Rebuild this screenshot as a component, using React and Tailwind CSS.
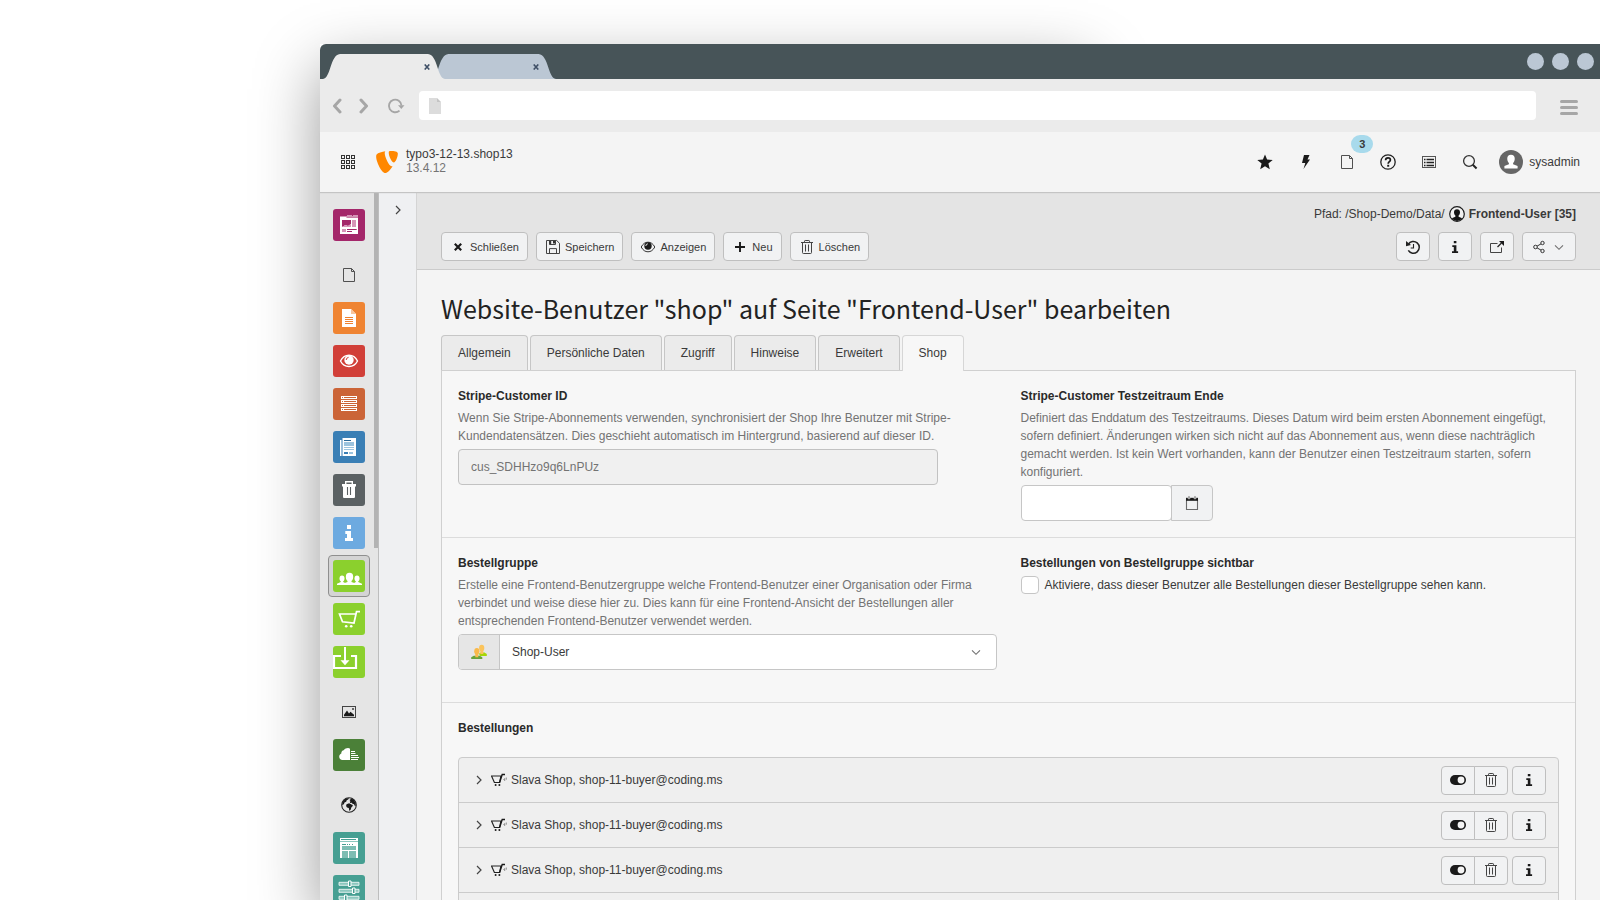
import React from "react";
import { SiTypo3 } from "react-icons/si";

/* ---------- 16px action icons ---------- */

function Icon({ children, className = "h-4 w-4" }) {
  return (
    <svg viewBox="0 0 16 16" fill="none" className={`${className} shrink-0`} aria-hidden="true">
      {children}
    </svg>
  );
}

const CloseIcon = () => (
  <Icon>
    <path d="M4.8 4.8 11.2 11.2M11.2 4.8 4.8 11.2" stroke="#1a1a1a" strokeWidth="2.2" />
  </Icon>
);

const SaveIcon = () => (
  <Icon>
    <path d="M1.5 1.5h10.2l2.8 2.8v10.2h-13z" stroke="#444" />
    <path d="M4.5 1.5v4h6v-4M4.5 14.5V9.6h7v4.9" stroke="#444" />
    <path d="M8 2h2v2.6H8zM4.6 2h1.6v3.4H4.6z" fill="#333" />
  </Icon>
);

const EyeIcon = () => (
  <Icon>
    <path d="M1.2 8C3 4.6 5.3 3.2 8 3.2S13 4.600 14.800 8C13 11.400 10.700 12.800 8 12.800S3 11.400 1.200 8z" stroke="#333" />
    <circle cx="8" cy="7" r="3.700" fill="#1a1a1a" />
    <path d="M5.800 7A2.200 2.200 0 0 1 7.800 4.800" stroke="#fff" strokeWidth=".9" />
  </Icon>
);

const PlusIcon = () => (
  <Icon>
    <path d="M8 3v10M3 8h10" stroke="#1a1a1a" strokeWidth="1.900" />
  </Icon>
);

const TrashIcon = () => (
  <Icon>
    <path d="M3.500 3.500v10.100q0 .9.900.9h7.200q.9 0 .9-.9V3.500" stroke="#444" />
    <path d="M2 3.500h12" stroke="#444" />
    <path d="M5.500 3V2.200q0-.7.700-.7h3.600q.7 0 .7.700V3" stroke="#444" />
    <path d="M6.500 5.500v7M9.500 5.500v7" stroke="#444" />
  </Icon>
);

const HistoryIcon = () => (
  <Icon>
    <path d="M3.300 5.300A5.900 5.900 0 1 1 3.300 11.400" stroke="#222" strokeWidth="1.500" />
    <path d="M1 2v5.200l5-1.200z" fill="#222" />
    <path d="M8.500 5v4H5.700" stroke="#222" strokeWidth="1.100" />
  </Icon>
);

const InfoIcon = () => (
  <Icon>
    <path d="M6.800 2h2.600v2.300H6.800zM5.300 6.300h4.100v6h1.700V14H5v-1.700h1.800V8H5.300z" fill="#1a1a1a" />
  </Icon>
);

const OpenIcon = () => (
  <Icon>
    <path d="M8.500 4.500H1.500v9h11V8.500" stroke="#444" />
    <path d="M8.500 8 12.500 4" stroke="#222" strokeWidth="1.200" />
    <path d="M10 2h5v5z" fill="#1a1a1a" />
  </Icon>
);

const ShareIcon = () => (
  <Icon>
    <circle cx="4.500" cy="8" r="1.800" stroke="#333" />
    <circle cx="11.500" cy="4" r="1.700" stroke="#333" />
    <circle cx="11.500" cy="12" r="1.700" stroke="#333" />
    <path d="M6.100 7.100 10 4.900M6.100 8.900l3.900 2.200" stroke="#333" />
  </Icon>
);

const ChevronDown = () => (
  <Icon>
    <path d="M4 6.300l4 4 4-4" stroke="#707070" strokeWidth="1.100" />
  </Icon>
);

const ChevronRight = () => (
  <Icon>
    <path d="M6 4l4 4-4 4" stroke="#444" strokeWidth="1.200" />
  </Icon>
);

const CalendarIcon = () => (
  <Icon>
    <path d="M2.500 4.500v10h11v-10" stroke="#6b6b6b" strokeWidth="1.100" />
    <path d="M2 2.800h12v3H2z" fill="#1a1a1a" />
    <path d="M4 1h2v2.800H4zM10 1h2v2.800h-2z" fill="#8a8a8a" stroke="#eee" strokeWidth=".5" />
  </Icon>
);

const ToggleOn = () => (
  <Icon>
    <rect x="0" y="3" width="16" height="10" rx="5" fill="#1a1a1a" />
    <circle cx="11" cy="8" r="3.400" fill="#f4f4f4" />
  </Icon>
);

const OrderCart = () => (
  <Icon>
    <path d="M.5 4h9.500L8.600 10.500H3.400z" stroke="#222" strokeWidth="1.200" />
    <path d="M8.600 10.500 11.200 2.500H14" stroke="#1a1a1a" strokeWidth="1.400" />
    <circle cx="4.600" cy="13" r="1" fill="#1a1a1a" />
    <circle cx="8.400" cy="13" r="1" fill="#1a1a1a" />
    <path d="M12.500 8l1.200-1.500v2.500M15.300 5.500v2.200" stroke="#777" strokeWidth=".8" />
  </Icon>
);

const PageIcon = () => (
  <Icon>
    <path d="M2.500 1.500h8l3 3v10h-11z" stroke="#505050" />
    <path d="M10.500 1.500v3h3" stroke="#505050" />
  </Icon>
);

const StarIcon = () => (
  <Icon>
    <path d="M8 .4l2.100 5.200 5.600.4-4.300 3.600 1.400 5.700L8 12.300l-4.800 3 1.400-5.700L.3 6l5.600-.4z" fill="#1a1a1a" />
  </Icon>
);

const BoltIcon = () => (
  <Icon>
    <path d="M6 1h5.500L9.500 5.500H12L5.500 15l1.800-6H4z" fill="#1a1a1a" />
  </Icon>
);

const HelpIcon = () => (
  <Icon>
    <circle cx="8" cy="8" r="7.200" stroke="#222" strokeWidth="1.300" />
    <path d="M5.600 6.300c0-1.500 1-2.400 2.400-2.400s2.400.9 2.400 2.100c0 1.700-2.200 1.700-2.200 3.700" stroke="#1a1a1a" strokeWidth="1.700" />
    <path d="M7.200 10.800h2v1.900h-2z" fill="#1a1a1a" />
  </Icon>
);

const ListIcon = () => (
  <Icon>
    <rect x="1.500" y="2.500" width="13" height="11" stroke="#555" />
    <path d="M3 5.500h1.500M3 8.500h1.500M3 11.500h1.500M5.500 5.500H13M5.500 8.500H13M5.500 11.500H13" stroke="#222" strokeWidth="1.400" />
  </Icon>
);

const SearchIcon = () => (
  <Icon>
    <circle cx="7" cy="7" r="5.400" stroke="#333" strokeWidth="1.300" />
    <path d="M10.800 10.800 14.600 14.400" stroke="#222" strokeWidth="2" />
  </Icon>
);

const GridIcon = () => (
  <Icon>
    {[1.5, 6.5, 11.5].map((y) =>
      [1.5, 6.5, 11.5].map((x) => (
        <rect key={`${x}-${y}`} x={x} y={y} width="3" height="3" stroke="#333" />
      ))
    )}
  </Icon>
);

const ImageIcon = () => (
  <Icon>
    <rect x="1.500" y="2.500" width="13" height="11" stroke="#444" />
    <path d="M3 12.200v-1.500L6 6.500l2 3 1.500-1.800 3.500 3v1.500z" fill="#1a1a1a" />
    <path d="M11 4h2v2h-2z" fill="#666" />
  </Icon>
);

const GlobeIcon = () => (
  <Icon>
    <circle cx="8" cy="8" r="7.300" stroke="#222" strokeWidth="1.100" />
    <path d="M2 4.500 4.500 1.800 8 1l-.8 1.500-1.500.8-.5 1.500-1.700.8-.6 1.600L1 8zM8.500 3l2.200-1.500 2.500 1.800 1.500 3.200v2.500l-1-.3-.8-1.700-1.200.2-.7-1.400-1.700.2-.6-1.200.9-.6zM5.500 7.300l2.600-1 2.900 1.500 1 1-1.700 1.800-.5 1.900-1.500 1.500-.5-3-1.800-.6-.9-1.400z" fill="#1a1a1a" />
  </Icon>
);

const UserAvatar = ({ dark }) =>
  dark ? (
    <Icon>
      <circle cx="8" cy="8" r="7.300" stroke="#1a1a1a" strokeWidth="1.200" fill="#f0f0f0" />
      <path d="M8 3.300c1.900 0 3 1.200 3 2.900 0 1.500-.6 2.600-1.400 3.400v1.200l3.600 1.400A7 7 0 0 1 8 15a7 7 0 0 1-5.200-2.800l3.600-1.400V9.600C5.600 8.800 5 7.700 5 6.200c0-1.700 1.100-2.900 3-2.900z" fill="#111" />
    </Icon>
  ) : (
    <Icon className="h-6 w-6">
      <circle cx="8" cy="8" r="8" fill="#666" />
      <path d="M8 3.200c1.600 0 2.500 1.100 2.500 2.600 0 1.200-.5 2.200-1.100 2.800v.9l3 1.200v1.600H3.600v-1.600l3-1.200v-.9C6 8 5.500 7 5.500 5.800c0-1.500.9-2.600 2.500-2.600z" fill="#fff" />
    </Icon>
  );

const GroupIcon = () => (
  <Icon>
    <path d="M8 9.800 9.500 8.500h4L15.800 10v2H9z" fill="#a6d608" />
    <ellipse cx="10.700" cy="4" rx="2.600" ry="3.300" fill="#fbc45c" />
    <path d="M9.300 6h3v4h-3z" fill="#fbc45c" />
    <path d="M.2 15v-1.700l2.600-1.500h6L11.300 13.300V15z" fill="#68a33b" />
    <ellipse cx="5.800" cy="7.300" rx="2.600" ry="3.400" fill="#f9b94a" />
    <path d="M4.300 9.500h3v3.800h-3z" fill="#f9b94a" />
  </Icon>
);

/* ---------- 32px module glyphs ---------- */

const Glyph = ({ children }) => (
  <svg viewBox="0 0 32 32" fill="none" className="h-8 w-8" aria-hidden="true">
    {children}
  </svg>
);

const glyphs = {
  layout: (
    <Glyph>
      <path d="M7 7.500h18V25H7z" fill="#fff" />
      <path d="M14 6.500h5M20 6.500h5" stroke="#d794b8" />
      <path d="M13.500 8.500H25" stroke="#a4276a" strokeWidth=".6" />
      <path d="M9 11h9v4L15 17l-2.500-1L9 18z" fill="#a4276a" />
      <path d="M9 18l3.500-2 2.500 1 3-2v3zM19 11h4v7h-4zM9 20h4v3H9z" fill="#d794b8" />
      <path d="M14 20.500h9.700M14 22.500h5" stroke="#a4276a" />
    </Glyph>
  ),
  page: (
    <Glyph>
      <path d="M9 7h9l5 5v13H9z" fill="#fff" />
      <path d="M18 7l5 5h-5z" fill="#f8c59c" />
      <path d="M12 15.500h8M12 17.500h8M12 19.500h8M12 21.500h8" stroke="#ef8230" />
    </Glyph>
  ),
  view: (
    <Glyph>
      <path d="M7.500 16C9.500 12 12.500 10.300 16 10.300S22.500 12 24.500 16C22.500 20 19.500 21.500 16 21.500S9.500 20 7.500 16z" stroke="#fff" strokeWidth="1.400" />
      <circle cx="16" cy="15" r="4.700" fill="#fff" />
      <path d="M13.200 15A2.800 2.800 0 0 1 15.600 12.300" stroke="#d13f38" />
    </Glyph>
  ),
  list: (
    <Glyph>
      <path d="M8 8h16v3H8zM8 12h16v3H8zM8 16h16v3H8zM8 20h16v3H8z" fill="#fff" />
      <path d="M9 9.500h1M9 13.500h1M9 17.500h1M9 21.500h1M11 9.500h12M11 13.500h12M11 17.500h12M11 21.500h12" stroke="#cb6437" />
    </Glyph>
  ),
  news: (
    <Glyph>
      <path d="M9.500 7H23v18H9.500zM7 9h1.500v16H7z" fill="#fff" />
      <path d="M11 9.500h7" stroke="#2a6796" />
      <path d="M11 11h10v4H11zM16 21h4v2h-4z" fill="#9cc3de" />
      <path d="M11 21h4v2h-4z" fill="#3a7fb5" />
      <path d="M11 16.500h10M11 18.500h10" stroke="#9cc3de" />
    </Glyph>
  ),
  trash: (
    <Glyph>
      <path d="M9 10h14v2.500h-1V23q0 1-1 1H11q-1 0-1-1V12.500H9z" fill="#fff" />
      <path d="M12.700 10V7.700h6.600V10" stroke="#fff" strokeWidth="1.400" />
      <path d="M14.500 13v8M17.500 13v8" stroke="#5b6163" strokeWidth="1.100" />
    </Glyph>
  ),
  info: (
    <Glyph>
      <path d="M14 8h4v4h-4zM12.300 14H18v7h2v3h-8v-3h2v-4h-1.700z" fill="#fff" />
    </Glyph>
  ),
  users: (
    <Glyph>
      <g fill="#fff">
        <ellipse cx="9" cy="18.500" rx="2.500" ry="3" />
        <path d="M7.800 20h2.400v2l2 1v2H4v-1.200l3.800-1.800z" />
        <ellipse cx="24" cy="18.500" rx="2.500" ry="3" />
        <path d="M22.800 20h2.400v2l3.800 1.800V25h-8v-2l1.800-1z" />
        <ellipse cx="16.500" cy="16.900" rx="3.700" ry="4.200" />
        <path d="M14.500 19h4v3l5 1.800V25h-14v-1.200l5-1.800z" />
      </g>
    </Glyph>
  ),
  cart: (
    <Glyph>
      <path d="M22.800 11H6.500l3 7.800 11.500 1.200 2.500-11.300H27" stroke="#fff" strokeWidth="1.700" />
      <circle cx="13.200" cy="23.300" r="1.300" fill="#fff" />
      <circle cx="18.200" cy="23.300" r="1.300" fill="#fff" />
    </Glyph>
  ),
  inbox: (
    <Glyph>
      <path d="M8 10H1v12h22V10h-5" stroke="#fff" strokeWidth="2.200" />
      <path d="M12 1v14" stroke="#fff" strokeWidth="2" />
      <path d="M7.500 14.300h9L12 19.300z" fill="#fff" />
    </Glyph>
  ),
  cloud: (
    <Glyph>
      <path d="M17 21H9.500C7.500 21 6.200 19.700 6.200 17.800 6.200 16 7.200 15 8.300 14.500 8.200 12.600 9.300 11.500 10.700 11.300 11.700 9.800 13.500 9 15 9c.9 0 1.500.3 2 .7z" fill="#fff" />
      <path d="M18 12.500h4M18 14.500h4.500M18 16.500h7M18 18.500h8M18 20.500h7" stroke="#fff" />
    </Glyph>
  ),
  store: (
    <Glyph>
      <path d="M7 6h18v20H7z" fill="#fff" />
      <path d="M8 7.500h15M9 12.500h4M14 12.500h1M16 12.500h1M19 12.500h1" stroke="#469f92" />
      <path d="M7 9.500h18" stroke="#8cc7be" />
      <path d="M9 14h14v4H9zM9 19h6v7H9zM16 19h7v7h-7z" fill="#7dbdb3" />
    </Glyph>
  ),
  sliders: (
    <Glyph>
      <path d="M6 7.300h20v3H6zM6 14.300h20v3H6zM6 21.300h20v3H6z" fill="#8cc7be" stroke="#fff" strokeWidth=".8" />
      <path d="M15.500 6h2.500v5.500h-2.500zM19.500 13h2.500v5.500h-2.500zM11.500 20h2.500v5.500h-2.500z" fill="#469f92" stroke="#fff" />
    </Glyph>
  ),
};

const modules = [
  { label: "Layout", glyph: "layout", color: "bg-[#a4276a]" },
  { header: <PageIcon />, label: "Web" },
  { label: "Seite", glyph: "page", color: "bg-[#ef8432]" },
  { label: "Anzeigen", glyph: "view", color: "bg-[#d13f38]" },
  { label: "Liste", glyph: "list", color: "bg-[#cb6437]" },
  { label: "News", glyph: "news", color: "bg-[#3a7fb5]" },
  { label: "Papierkorb", glyph: "trash", color: "bg-[#5b6163]" },
  { label: "Info", glyph: "info", color: "bg-[#6daae0]" },
  { label: "Benutzer", glyph: "users", color: "bg-[#8bd02d]", active: true },
  { label: "Shop", glyph: "cart", color: "bg-[#8bd02d]" },
  { label: "Import", glyph: "inbox", color: "bg-[#8bd02d]" },
  { header: <ImageIcon />, label: "Datei" },
  { label: "Dateiliste", glyph: "cloud", color: "bg-[#4b8038]" },
  { header: <GlobeIcon />, label: "Seiten" },
  { label: "Verwaltung", glyph: "store", color: "bg-[#469f92]" },
  { label: "Einstellungen", glyph: "sliders", color: "bg-[#469f92]" },
];

/* ---------- browser chrome ---------- */

function BrowserTab({ fill, className }) {
  return (
    <div className={`relative flex h-[25px] items-center justify-end ${className}`}>
      <svg viewBox="0 0 122 25" preserveAspectRatio="none" className="absolute inset-0 h-full w-full" aria-hidden="true">
        <path d="M0 25C8 24 7 1 17 0h88c10 1 9 24 17 25z" fill={fill} />
      </svg>
      <button type="button" aria-label="Tab schließen" className="relative flex h-3 w-3 items-center justify-center">
        <svg viewBox="0 0 6 6" className="h-1.5 w-1.5" aria-hidden="true">
          <path d="M.7.4l4.600 5.200M5.300.4.7 5.600" stroke="#3f4f66" strokeWidth="1.500" />
        </svg>
      </button>
    </div>
  );
}

function BrowserChrome() {
  return (
    <>
      <div className="flex h-[35px] items-end justify-between rounded-tl-md bg-[#475458] pl-[3px] pr-1.5">
        <div className="flex">
          <BrowserTab fill="#ebebeb" className="z-10 w-[122px] pr-3" />
          <BrowserTab fill="#bbc7d4" className="-ml-3.5 w-[125px] pr-3.5" />
        </div>
        <div className="flex gap-2 self-center">
          <span className="h-[17px] w-[17px] rounded-full bg-[#bbc7d4]" />
          <span className="h-[17px] w-[17px] rounded-full bg-[#bbc7d4]" />
          <span className="h-[17px] w-[17px] rounded-full bg-[#bbc7d4]" />
        </div>
      </div>
      <div className="flex h-[53px] items-center bg-[#ebebeb] pl-2 pr-[22px]">
        <button type="button" aria-label="Zurück" className="flex w-[18px] justify-center">
          <svg viewBox="0 0 10 16" fill="none" className="h-4 w-2.5"><path d="M8 2 2.500 8 8 14" stroke="#a6a6a6" strokeWidth="3" strokeLinecap="round" strokeLinejoin="round" /></svg>
        </button>
        <button type="button" aria-label="Vorwärts" className="ml-[9px] flex w-[18px] justify-center">
          <svg viewBox="0 0 10 16" fill="none" className="h-4 w-2.5"><path d="M2 2 7.500 8 2 14" stroke="#a6a6a6" strokeWidth="3" strokeLinecap="round" strokeLinejoin="round" /></svg>
        </button>
        <button type="button" aria-label="Neu laden" className="ml-3.5 flex w-[18px] justify-center">
          <svg viewBox="0 0 18 16" fill="none" className="h-4 w-[18px]"><path d="M12.500 12.600A6.300 6.300 0 1 1 14.500 7.500" stroke="#a6a6a6" strokeWidth="1.900" /><path d="M11 7.300h6.500L14.300 11z" fill="#a6a6a6" /></svg>
        </button>
        <div className="ml-3.5 flex h-[29px] flex-1 items-center rounded bg-white px-2.5">
          <svg viewBox="0 0 12 16" className="h-4 w-3 shrink-0" aria-hidden="true"><path d="M0 0h8v4h4v12H0z" fill="#dcdcdc" /><path d="M8 0l4 4H8z" fill="#c4c4c4" /></svg>
          <input type="text" aria-label="Adresse" className="h-full w-full bg-transparent px-2 outline-none" />
        </div>
        <button type="button" aria-label="Menü" className="ml-6 flex w-[18px] flex-col gap-[3px] pt-1">
          <span className="h-[3px] rounded-full bg-[#a6a6a6]" />
          <span className="h-[3px] rounded-full bg-[#a6a6a6]" />
          <span className="h-[3px] rounded-full bg-[#a6a6a6]" />
        </button>
      </div>
    </>
  );
}

/* ---------- backend ---------- */

function Topbar() {
  return (
    <header className="relative z-10 flex h-[60px] items-center bg-[#f4f4f4] pl-5 pr-5 shadow-[0_1px_1px_#c4c4c4]">
      <button type="button" aria-label="Menü umschalten"><GridIcon /></button>
      <a href="#" className="ml-5 flex items-center gap-2 leading-[14px]">
        <SiTypo3 className="h-[22px] w-[22px] text-[#ff8700]" aria-hidden="true" />
        <span className="flex flex-col pb-0.5">
          <span>typo3-12-13.shop13</span>
          <span className="text-[#737373]">13.4.12</span>
        </span>
      </a>
      <div className="ml-auto flex items-center gap-[25px]">
        <button type="button" aria-label="Lesezeichen"><StarIcon /></button>
        <button type="button" aria-label="Cache leeren"><BoltIcon /></button>
        <button type="button" aria-label="Offene Dokumente" className="relative">
          <PageIcon />
          <span className="absolute -top-[19px] left-3 flex h-[18px] w-[22px] items-center justify-center rounded-full bg-[#a8daec] text-[11px] font-bold">3</span>
        </button>
        <button type="button" aria-label="Hilfe"><HelpIcon /></button>
        <button type="button" aria-label="Systeminformationen"><ListIcon /></button>
        <button type="button" aria-label="Suche"><SearchIcon /></button>
      </div>
      <button type="button" className="ml-[21px] flex items-center gap-1.5">
        <UserAvatar />
        sysadmin
      </button>
    </header>
  );
}

function ModuleMenu() {
  return (
    <nav className="flex w-[59px] shrink-0 justify-between border-r border-[#bdbdbd] bg-[#e5e5e5]">
      <ul className="ml-2 flex flex-col gap-px pt-3">
        {modules.map((m) =>
          m.header ? (
            <li key={m.label} className="flex h-[49px] shrink-0 items-center justify-center pt-1.5" title={m.label}>
              {m.header}
            </li>
          ) : (
            <li key={m.label}>
              <a
                href="#"
                aria-label={m.label}
                className={`flex h-[42px] w-[42px] items-center justify-center rounded border ${m.active ? "border-[#8f8f8f] bg-[#d4d4d4]" : "border-transparent"}`}
              >
                <span className={`overflow-hidden rounded-[3px] ${m.color}`}>{glyphs[m.glyph]}</span>
              </a>
            </li>
          )
        )}
      </ul>
      <div className="h-[356px] w-1 bg-[#b3b3b3]" />
    </nav>
  );
}

const btn = "flex h-[29px] items-center gap-1 border border-[#bfbfbf] bg-[#f1f2f3] px-2 text-[11px]";

function DocHeader() {
  return (
    <div className="border-b border-[#cbcbcb] bg-[#e4e4e4] px-6 pt-3 pb-2">
      <div className="flex h-5 items-center justify-end gap-1">
        <span>Pfad: /Shop-Demo/Data/</span>
        <UserAvatar dark />
        <strong>Frontend-User [35]</strong>
      </div>
      <div className="mt-2 flex justify-between">
        <div className="flex gap-2">
          <button type="button" className={`${btn} rounded`}><CloseIcon />Schließen</button>
          <button type="button" className={`${btn} rounded`}><SaveIcon />Speichern</button>
          <button type="button" className={`${btn} rounded`}><EyeIcon />Anzeigen</button>
          <button type="button" className={`${btn} rounded`}><PlusIcon />Neu</button>
          <button type="button" className={`${btn} rounded`}><TrashIcon />Löschen</button>
        </div>
        <div className="flex gap-2">
          <button type="button" aria-label="Verlauf" className={`${btn} rounded`}><HistoryIcon /></button>
          <button type="button" aria-label="Information" className={`${btn} rounded`}><InfoIcon /></button>
          <button type="button" aria-label="In neuem Fenster öffnen" className={`${btn} rounded`}><OpenIcon /></button>
          <button type="button" aria-label="Teilen" className={`${btn} rounded`}><ShareIcon /><ChevronDown /></button>
        </div>
      </div>
    </div>
  );
}

const tabs = ["Allgemein", "Persönliche Daten", "Zugriff", "Hinweise", "Erweitert", "Shop"];

function Tabs() {
  return (
    <div role="tablist" className="relative flex gap-0.5">
      {tabs.map((t) => {
        const active = t === "Shop";
        return (
          <button
            key={t}
            type="button"
            role="tab"
            aria-selected={active}
            className={`rounded-t border border-b-0 px-4 ${active ? "-mb-px h-9 border-[#d6d6d6] bg-[#f7f7f7] pb-px" : "h-[35px] border-[#c6c6c6] bg-[#ebebeb]"}`}
          >
            {t}
          </button>
        );
      })}
    </div>
  );
}

const labelCls = "block font-bold text-[#2a2a2a]";
const helpCls = "mt-1 mb-1 text-[#737373]";

const orders = [
  { id: 1, name: "Slava Shop", email: "shop-11-buyer@coding.ms" },
  { id: 2, name: "Slava Shop", email: "shop-11-buyer@coding.ms" },
  { id: 3, name: "Slava Shop", email: "shop-11-buyer@coding.ms" },
];

function OrderRow({ order }) {
  return (
    <li className="flex h-[45px] items-center border-b border-[#cbcbcb] px-3">
      <button type="button" className="flex items-center gap-1">
        <ChevronRight />
        <OrderCart />
        <span>{`${order.name}, ${order.email}`}</span>
      </button>
      <div className="ml-auto flex gap-1">
        <div className="flex">
          <button type="button" aria-label="Deaktivieren" className={`${btn} rounded-l`}><ToggleOn /></button>
          <button type="button" aria-label="Löschen" className={`${btn} -ml-px rounded-r`}><TrashIcon /></button>
        </div>
        <button type="button" aria-label="Information" className={`${btn} rounded`}><InfoIcon /></button>
      </div>
    </li>
  );
}

function ShopPanel() {
  return (
    <section role="tabpanel" className="border border-[#d0d0d0] bg-[#f7f7f7]">
      <div className="grid grid-cols-2 gap-x-6 border-b border-[#dcdcdc] p-4">
        <div>
          <label htmlFor="customer" className={labelCls}>Stripe-Customer ID</label>
          <p className={helpCls}>
            Wenn Sie Stripe-Abonnements verwenden, synchronisiert der Shop Ihre Benutzer mit Stripe-Kundendatensätzen. Dies geschieht automatisch im Hintergrund, basierend auf dieser ID.
          </p>
          <input
            id="customer"
            type="text"
            readOnly
            defaultValue="cus_SDHHzo9q6LnPUz"
            className="h-9 w-full max-w-[480px] rounded border border-[#c2c2c2] bg-[#f0f0f0] px-3 text-[#737373] outline-none"
          />
        </div>
        <div>
          <label htmlFor="trial" className={labelCls}>Stripe-Customer Testzeitraum Ende</label>
          <p className={helpCls}>
            Definiert das Enddatum des Testzeitraums. Dieses Datum wird beim ersten Abonnement eingefügt, sofern definiert. Änderungen wirken sich nicht auf das Abonnement aus, wenn diese nachträglich gemacht werden. Ist kein Wert vorhanden, kann der Benutzer einen Testzeitraum starten, sofern konfiguriert.
          </p>
          <div className="flex">
            <input id="trial" type="text" className="h-9 w-[151px] rounded border border-[#c6c6c6] bg-white px-3 outline-none" />
            <button type="button" aria-label="Datum wählen" className="-ml-px flex h-9 w-[42px] items-center justify-center rounded-r border border-[#c6c6c6] bg-[#f1f2f3]">
              <CalendarIcon />
            </button>
          </div>
        </div>
      </div>

      <div className="grid grid-cols-2 gap-x-6 border-b border-[#dcdcdc] px-4 pt-4 pb-8">
        <div>
          <label htmlFor="group" className={labelCls}>Bestellgruppe</label>
          <p className={helpCls}>
            Erstelle eine Frontend-Benutzergruppe welche Frontend-Benutzer einer Organisation oder Firma verbindet und weise diese hier zu. Dies kann für eine Frontend-Ansicht der Bestellungen aller entsprechenden Frontend-Benutzer verwendet werden.
          </p>
          <div className="flex h-9 overflow-hidden rounded border border-[#c6c6c6] bg-white">
            <span className="flex w-[41px] items-center justify-center border-r border-[#c6c6c6] bg-[#e6e6e6]"><GroupIcon /></span>
            <span className="relative flex flex-1 items-center">
              <select id="group" className="h-full w-full appearance-none bg-transparent px-3 outline-none">
                <option>Shop-User</option>
              </select>
              <span className="pointer-events-none absolute right-3"><ChevronDown /></span>
            </span>
          </div>
        </div>
        <div>
          <span className={labelCls}>Bestellungen von Bestellgruppe sichtbar</span>
          <label className="mt-1 flex items-center gap-1.5">
            <input type="checkbox" className="h-[18px] w-[18px] appearance-none rounded border border-[#c6c6c6] bg-white" />
            Aktiviere, dass dieser Benutzer alle Bestellungen dieser Bestellgruppe sehen kann.
          </label>
        </div>
      </div>

      <div className="p-4">
        <h2 className={labelCls}>Bestellungen</h2>
        <ul className="mt-5 rounded border border-[#cbcbcb] bg-[#efefef] pb-11">
          {orders.map((o) => (
            <OrderRow key={o.id} order={o} />
          ))}
        </ul>
      </div>
    </section>
  );
}

export default function App() {
  return (
    <div className="h-screen overflow-hidden bg-white pt-11 pl-[20%] font-['Liberation_Sans',Arial,sans-serif] text-[12px] leading-[18px] text-[#3a3a3a]">
      <div className="relative h-full">
        <div className="absolute inset-y-0 left-0 w-[60%] shadow-[0_24px_60px_rgba(0,0,0,0.4)]" aria-hidden="true" />
        <div className="relative flex h-full flex-col">
          <BrowserChrome />
          <Topbar />
          <div className="flex min-h-0 flex-1 overflow-hidden">
            <ModuleMenu />
            <aside className="flex w-[38px] shrink-0 justify-center border-r border-[#d4d4d4] bg-[#eff0f2] pt-2.5">
              <button type="button" aria-label="Seitenbaum öffnen" className="h-4 self-start"><ChevronRight /></button>
            </aside>
            <main className="min-w-0 flex-1 bg-[#f4f4f4]">
              <DocHeader />
              <div className="px-6 pt-6">
                <h1 className="mb-3 font-['Noto_Sans_CJK_SC',sans-serif] text-[25px] leading-[29px] font-normal text-[#222]">
                  Website-Benutzer "shop" auf Seite "Frontend-User" bearbeiten
                </h1>
                <Tabs />
                <ShopPanel />
              </div>
            </main>
          </div>
        </div>
      </div>
    </div>
  );
}
